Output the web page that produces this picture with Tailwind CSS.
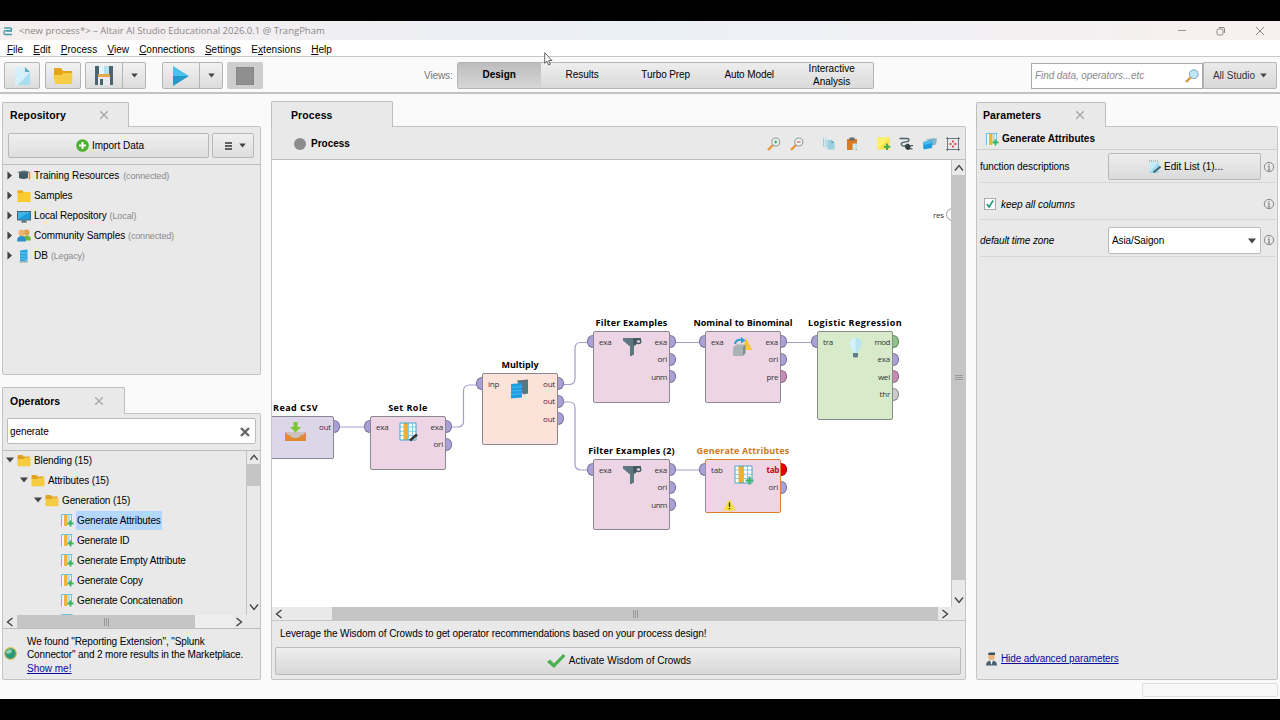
<!DOCTYPE html>
<html lang="en">
<head>
    <meta charset="UTF-8">
    <meta name="viewport" content="width=device-width, initial-scale=1.0">
    <title>Altair AI Studio</title>
    <script src="https://cdn.jsdelivr.net/npm/@tailwindcss/browser@4"></script>
</head>
<body class="bg-black w-[1280px] h-[720px] overflow-hidden py-[21px] text-black text-[10px] leading-[14px] font-['Liberation_Sans',Arial,sans-serif]">

    <!-- shared icons -->
    <svg class="hidden">
        <symbol id="folder" viewBox="0 0 14 13"><path d="M0.5 2q0-1 1-1h4l1 1.500h6v3h-12z" fill="#dfa21d"/><path d="M0.500 5h6l1-1.200h6v7.700q0 .8-1 .8h-11q-1 0-1-.8z" fill="#f5cb42"/></symbol>
        <symbol id="attr" viewBox="0 0 20 20"><path d="M1 1h17v17h-17z" fill="#fff"/><path d="M1 5h17M1 9.300h17M1 13.500h17M9.500 1v17M13.500 1v17" stroke="#7fcbe6" fill="none"/><rect x="4.500" y="1" width="4.500" height="17" fill="#f2ae2e"/><path d="M1 18v-17h17v17z" stroke="#3ea9cc" fill="none"/><path d="M15.500 11.500v8M11.500 15.500h8" stroke="#35b765" stroke-width="2.200"/></symbol>
        <symbol id="attr-small" viewBox="0 0 13 13"><path d="M.5.5h11v12h-11z" fill="#eef8fb"/><path d="M.5 12.500v-12h11M8 1v8M10.500 1v8" fill="none" stroke="#6dbfdb"/><rect x="3" y="1" width="3.500" height="11" fill="#efb53a"/><path d="M9.500 6.500v6M6.500 9.500h6" stroke="#35b765" stroke-width="2"/></symbol>
        <symbol id="funnel" viewBox="0 0 20 20"><path d="M1 1h18v2.500l-7 6v8l-4 2v-10l-7-6z" fill="#5d7680"/><path d="M11 1h8v2l-8 6z" fill="#455a64"/><ellipse cx="16.500" cy="4.500" rx="2.300" ry="2" fill="#eed8e8" stroke="#455a64" stroke-width="1.300"/></symbol>
        <symbol id="info" viewBox="0 0 12 12"><circle cx="6" cy="6" r="4.700" fill="none" stroke="#858585"/><path d="M6 5v4M4.800 9h2.400M4.900 5.200h1.200M6 2.800v1.200" stroke="#777" fill="none"/></symbol>
        <symbol id="close" viewBox="0 0 10 10"><path d="M1.200 1.200l7.600 7.600M8.800 1.200l-7.600 7.600" stroke="#ababab" stroke-width="1.500"/></symbol>
        <symbol id="down" viewBox="0 0 8 6"><path d="M0 .5h8l-4 5z" fill="#444"/></symbol>
        <symbol id="right" viewBox="0 0 6 10"><path d="M.5 0l5.500 5-5.500 5z" fill="#444"/></symbol>
        <symbol id="chevron" viewBox="0 0 10 10"><path d="M1 7.500l4-5 4 5" stroke="#444" stroke-width="1.400" fill="none"/></symbol>
        <symbol id="lens" viewBox="0 0 14 14"><path d="M1 13l5.500-5.500" stroke="#e8983a" stroke-width="2.400"/><circle cx="8.800" cy="5" r="4" fill="#eef3f2" stroke="#909b98" stroke-width="1.100"/></symbol>
    </svg>

    <div class="h-[678px] bg-[#fafafa] flex flex-col overflow-hidden">

        <!-- title bar -->
        <div class="h-[19px] shrink-0 flex items-center bg-linear-to-r from-[#f5eeee] via-[#ebf0f7] to-[#f8f0ee] pl-[3px] pr-[15px]">
            <svg class="w-[10px] h-[10px]" viewBox="0 0 10 10"><path d="M1 2h6q2 0 1.500 1.500t-2 1.200h-4q-1.500 0-1.500 2t1.500 1.800h6.500M3 5h6" stroke="#3f9bab" stroke-width="1.300" fill="none"/></svg>
            <span class="ml-[6px] text-[9.500px] tracking-[0.010px] text-[#8b8787] font-['Open_Sans',sans-serif]">&lt;new process*&gt; – Altair AI Studio Educational 2026.0.1 @ TrangPham</span>
            <div class="ml-auto flex items-center gap-[29px]">
                <svg class="w-[10px] h-[10px]" viewBox="0 0 10 10"><path d="M1 4.500h8" stroke="#999"/></svg>
                <svg class="w-[10px] h-[10px]" viewBox="0 0 10 10"><rect x="1" y="3" width="6" height="6" rx="1.500" fill="none" stroke="#888"/><path d="M3 1.500h4q1.500 0 1.500 1.500v4" fill="none" stroke="#888"/></svg>
                <svg class="w-[10px] h-[10px]" viewBox="0 0 10 10"><path d="M1 1l8 8M9 1l-8 8" stroke="#888"/></svg>
            </div>
        </div>

        <!-- menu -->
        <div class="h-[17px] shrink-0 flex items-center bg-white border-b border-[#c8c8c8] pl-[7px] pt-[3px] gap-[10.200px]">
            <span><u>F</u>ile</span>
            <span><u>E</u>dit</span>
            <span class="tracking-[0.050px]"><u>P</u>rocess</span>
            <span><u>V</u>iew</span>
            <span><u>C</u>onnections</span>
            <span><u>S</u>ettings</span>
            <span class="tracking-[0.080px]">E<u>x</u>tensions</span>
            <span><u>H</u>elp</span>
        </div>

        <!-- toolbar -->
        <div class="h-[37px] shrink-0 flex items-center border-b-2 border-[#c2c2c2] pl-1 pr-[3px] pt-[2px]">
            <button class="w-9 h-[27px] flex items-center justify-center border border-[#b5b5b5] rounded-[2px] bg-linear-to-b from-[#f2f2f2] to-[#dcdcdc]">
                <svg class="w-[17px] h-[20px]" viewBox="0 0 17 20"><path d="M1 1h10l5 5v13h-15z" fill="#d6f0fa"/><path d="M11 1v5h5z" fill="#62a9c2"/><path d="M16 6v13h-12z" fill="#a9def2"/></svg>
            </button>
            <button class="ml-[5px] w-9 h-[27px] flex items-center justify-center border border-[#b5b5b5] rounded-[2px] bg-linear-to-b from-[#f2f2f2] to-[#dcdcdc]">
                <svg class="w-5 h-[18px]" viewBox="0 0 20 18"><path d="M1 2q0-1 1-1h6l2 3h9v6h-18z" fill="#e6a417"/><path d="M.5 8h8l2-2h8q1 0 1 1l-.5 9q0 1-1 1h-15q-1 0-1-1z" fill="#f6cd46"/></svg>
            </button>
            <div class="ml-1 h-[27px] flex border border-[#b5b5b5] rounded-[2px] bg-linear-to-b from-[#f2f2f2] to-[#dcdcdc]">
                <button class="w-[37px] flex items-center justify-center border-r border-[#b5b5b5]">
                    <svg class="w-[18px] h-[19px]" viewBox="0 0 18 19"><path d="M0 0h18v19h-18z" fill="#4b6470"/><path d="M4 0h10v8h-10z" fill="#e4f4fa"/><path d="M9 0h5v8h-5z" fill="#b3e1f2"/><path d="M3 8h12v3h-12z" fill="#e3a64c"/><path d="M3 11h12v8h-12z" fill="#e8ecee"/><path d="M5 13h3v6h-3z" fill="#4b6470"/></svg>
                </button>
                <button class="w-[22px] flex items-center justify-center"><svg class="w-[7px] h-[5px]" viewBox="0 0 8 6"><use href="#down"/></svg></button>
            </div>
            <div class="ml-4 h-[27px] flex border border-[#b5b5b5] rounded-[2px] bg-linear-to-b from-[#f2f2f2] to-[#dcdcdc]">
                <button class="w-[37px] flex items-center justify-center border-r border-[#b5b5b5]">
                    <svg class="w-4 h-5" viewBox="0 0 16 20"><path d="M0 0l16 10h-16z" fill="#49c1ea"/><path d="M0 20l16-10h-16z" fill="#2699cb"/></svg>
                </button>
                <button class="w-[22px] flex items-center justify-center"><svg class="w-[7px] h-[5px]" viewBox="0 0 8 6"><use href="#down"/></svg></button>
            </div>
            <button class="ml-1 w-9 h-[27px] flex items-center justify-center rounded-[2px] bg-[#cdcdcd]"><span class="w-[18px] h-[18px] bg-[#8f8f8f] border border-[#868686]"></span></button>

            <span class="ml-[161px] text-[#777] tracking-[-0.100px]">Views:</span>
            <div class="ml-1 w-[417px] h-[27px] flex border border-[#b5b5b5] rounded-[2px] bg-linear-to-b from-[#eeeeee] to-[#dadada] text-center">
                <div class="w-[83px] pb-px flex items-center justify-center bg-linear-to-b from-[#bdbdbd] to-[#d6d6d6] font-bold">Design</div>
                <div class="w-[83px] pb-px flex items-center justify-center">Results</div>
                <div class="w-[84px] pb-px flex items-center justify-center tracking-[-0.100px]">Turbo Prep</div>
                <div class="w-[83px] pb-px flex items-center justify-center tracking-[-0.100px]">Auto Model</div>
                <div class="w-[82px] pb-[2px] flex items-center justify-center leading-[13px]">Interactive<br>Analysis</div>
            </div>

            <div class="ml-auto w-[172px] h-[26px] flex items-center justify-between bg-white border border-[#aaa] px-[3px]">
                <span class="italic text-[#8a8a8a] tracking-[-0.080px]">Find data, operators...etc</span>
                <svg class="w-[14px] h-[14px]" viewBox="0 0 14 14"><path d="M1 13l5-5" stroke="#d49a3a" stroke-width="2.400"/><circle cx="8.800" cy="5.200" r="4.400" fill="#bfe7f7" stroke="#7fa3b4"/></svg>
            </div>
            <button class="w-[74px] h-[27px] flex items-center justify-center gap-[5px] border border-[#b5b5b5] rounded-r-[2px] bg-linear-to-b from-[#eaeaea] to-[#d9d9d9] text-[#333]">All Studio <svg class="w-[7px] h-[5px]" viewBox="0 0 8 6"><use href="#down"/></svg></button>
        </div>

        <!-- panels -->
        <div class="h-[587px] shrink-0 flex pl-[2px] pt-[6px]">

            <!-- left column -->
            <div class="w-[259px] h-[580px] flex flex-col">
                <div class="relative z-10 w-[127px] h-[25px] mt-[2px] -mb-px shrink-0 flex items-center bg-[#e9e9e9] border border-b-0 border-[#bdbdbd] rounded-t-[2px] pl-[7px]">
                    <span class="w-[89px] font-bold text-[10.500px] tracking-[0.100px]">Repository</span>
                    <svg class="w-[10px] h-[10px]" viewBox="0 0 10 10"><use href="#close"/></svg>
                </div>
                <div class="h-[249px] shrink-0 bg-[#e9e9e9] border border-[#c4c4c4] rounded-[2px]">
                    <div class="h-[38px] flex items-start gap-[3px] pl-[5px] pt-[6px] border-b border-[#bdbdbd]">
                        <button class="w-[201px] h-[25px] flex items-center justify-center gap-[3px] border border-[#b8b8b8] rounded-[2px] bg-linear-to-b from-[#f0f0f0] to-[#dedede]">
                            <svg class="ml-[3px] w-[13px] h-[13px]" viewBox="0 0 13 13"><circle cx="6.500" cy="6.500" r="6.300" fill="#4caf2f"/><path d="M6.500 3v7M3 6.500h7" stroke="#fff" stroke-width="2"/></svg>
                            Import Data
                        </button>
                        <button class="w-[42px] h-[25px] flex items-center justify-center gap-[7px] pl-1 border border-[#b8b8b8] rounded-[2px] bg-linear-to-b from-[#f0f0f0] to-[#dedede]">
                            <svg class="w-[7px] h-[8px]" viewBox="0 0 7 8"><path d="M0 1h7M0 4h7M0 7h7" stroke="#333" stroke-width="1.300"/></svg>
                            <svg class="w-[7px] h-[5px]" viewBox="0 0 8 6"><use href="#down"/></svg>
                        </button>
                    </div>
                    <div class="pl-[4px] pt-px">
                        <div class="h-5 flex items-center">
                            <svg class="mb-px w-[5px] h-[9px]" viewBox="0 0 6 10"><use href="#right"/></svg>
                            <svg class="mb-px ml-[5px] w-[14px] h-[13px]" viewBox="0 0 14 13"><path d="M0 3l7-1.500 6.500 1.500-6.500 2.500z" fill="#5b7480"/><path d="M2 3.500h9v5.500q-4.500 2-9 0z" fill="#435b66"/><path d="M12.500 3.500v7" stroke="#e08e34" stroke-width="1.400"/></svg>
                            <span class="ml-[3px] tracking-[-0.060px]">Training Resources</span><span class="ml-1 text-[9px] text-[#8a8a8a] tracking-[-0.150px]">(connected)</span>
                        </div>
                        <div class="h-5 flex items-center">
                            <svg class="mb-px w-[5px] h-[9px]" viewBox="0 0 6 10"><use href="#right"/></svg>
                            <svg class="ml-[5px] w-[14px] h-[12px]" viewBox="0 0 14 12"><path d="M.5.500h5l1 1.500h7v10h-13z" fill="#f9cb2e"/><path d="M.5.500h5l1 1.500-1 1h-5z" fill="#e7a91e"/></svg>
                            <span class="ml-[3px] tracking-[-0.050px]">Samples</span>
                        </div>
                        <div class="h-5 flex items-center">
                            <svg class="mb-px w-[5px] h-[9px]" viewBox="0 0 6 10"><use href="#right"/></svg>
                            <svg class="ml-[5px] w-[14px] h-[13px]" viewBox="0 0 14 13"><path d="M0 1h14v9.500h-14z" fill="#4a6572"/><path d="M1 2h12v7.500h-12z" fill="#1b9ddb"/><path d="M1 2h12l-12 7z" fill="#3db4ea"/><path d="M5 10.500h4v1h1v1h-6v-1h1z" fill="#4a6572"/></svg>
                            <span class="ml-[3px] tracking-[-0.120px]">Local Repository</span><span class="ml-[3px] text-[9px] text-[#8a8a8a] tracking-[-0.100px]">(Local)</span>
                        </div>
                        <div class="h-5 flex items-center">
                            <svg class="mb-px w-[5px] h-[9px]" viewBox="0 0 6 10"><use href="#right"/></svg>
                            <svg class="mb-px ml-[5px] w-[14px] h-[13px]" viewBox="0 0 14 13"><circle cx="9.500" cy="3.500" r="3" fill="#e0a34d"/><path d="M6 11.500q0-5 4-5t4 5z" fill="#6fb540"/><circle cx="4.700" cy="4" r="3.200" fill="#eeb271"/><path d="M0 12.500q0-5.500 4.500-5.500t4.500 5.500z" fill="#2c8fc8"/></svg>
                            <span class="ml-[3px] tracking-[-0.070px]">Community Samples</span><span class="ml-[3px] text-[9px] text-[#8a8a8a] tracking-[-0.150px]">(connected)</span>
                        </div>
                        <div class="h-5 flex items-center">
                            <svg class="mb-px w-[5px] h-[9px]" viewBox="0 0 6 10"><use href="#right"/></svg>
                            <svg class="ml-[5px] w-[14px] h-[14px]" viewBox="0 0 14 14"><path d="M3 1.500l7.500-1v11l-7.500 1z" fill="#25a5dd"/><path d="M3 4h8M3 7h8M3 10h8" stroke="#8ed5f2" stroke-width=".7"/><path d="M2.500 12.500l8-.5v1.500h-8z" fill="#8aa"/></svg>
                            <span class="ml-[3px]">DB</span><span class="ml-[3px] text-[9px] text-[#8a8a8a] tracking-[-0.150px]">(Legacy)</span>
                        </div>
                    </div>
                </div>

                <div class="relative z-10 w-[123px] h-[27px] mt-[12px] -mb-px shrink-0 flex items-center bg-[#e9e9e9] border border-b-0 border-[#bdbdbd] rounded-t-[2px] pl-[7px]">
                    <span class="w-[84px] font-bold text-[10.500px]">Operators</span>
                    <svg class="w-[10px] h-[10px]" viewBox="0 0 10 10"><use href="#close"/></svg>
                </div>
                <div class="h-[267px] shrink-0 bg-[#e9e9e9] border border-[#c4c4c4] rounded-[2px] flex flex-col">
                    <div class="h-[37px] shrink-0 pl-1 pt-[4px] border-b border-[#bdbdbd]">
                        <div class="w-[249px] h-[26px] flex items-center justify-between pl-[2px] pr-[5px] pt-px bg-white border border-[#bbb] rounded-[2px]">
                            <span class="tracking-[-0.100px]">generate</span>
                            <svg class="w-[10px] h-[10px]" viewBox="0 0 10 10"><path d="M1 1l8 8M9 1l-8 8" stroke="#666" stroke-width="2.400"/></svg>
                        </div>
                    </div>
                    <div class="h-[164px] shrink-0 flex">
                        <div class="w-[244px] overflow-hidden border-r border-[#c4c4c4]">
                            <div class="h-5 flex items-center pl-[3px]"><svg class="mb-[2px] w-[8px] h-[6px]" viewBox="0 0 8 6"><use href="#down"/></svg><svg class="mb-px ml-[3px] w-[14px] h-[13px]" viewBox="0 0 14 13"><use href="#folder"/></svg><span class="ml-[3px] tracking-[-0.120px]">Blending (15)</span></div>
                            <div class="h-5 flex items-center pl-[17px]"><svg class="mb-[2px] w-[8px] h-[6px]" viewBox="0 0 8 6"><use href="#down"/></svg><svg class="mb-px ml-[3px] w-[14px] h-[13px]" viewBox="0 0 14 13"><use href="#folder"/></svg><span class="ml-[3px] tracking-[-0.120px]">Attributes (15)</span></div>
                            <div class="h-5 flex items-center pl-[31px]"><svg class="mb-[2px] w-[8px] h-[6px]" viewBox="0 0 8 6"><use href="#down"/></svg><svg class="mb-px ml-[3px] w-[14px] h-[13px]" viewBox="0 0 14 13"><use href="#folder"/></svg><span class="ml-[3px] tracking-[-0.120px]">Generation (15)</span></div>
                            <div class="h-5 flex items-center pl-[58px]"><svg class="mb-px w-[13px] h-[13px]" viewBox="0 0 13 13"><use href="#attr-small"/></svg><span class="ml-[2px] mb-px pl-px pr-[1px] h-[19px] leading-[19px] bg-[#b3d7ff] tracking-[-0.130px]">Generate Attributes</span></div>
                            <div class="h-5 flex items-center pl-[58px]"><svg class="mb-px w-[13px] h-[13px]" viewBox="0 0 13 13"><use href="#attr-small"/></svg><span class="ml-[3px] tracking-[-0.200px]">Generate ID</span></div>
                            <div class="h-5 flex items-center pl-[58px]"><svg class="mb-px w-[13px] h-[13px]" viewBox="0 0 13 13"><use href="#attr-small"/></svg><span class="ml-[3px] tracking-[-0.150px]">Generate Empty Attribute</span></div>
                            <div class="h-5 flex items-center pl-[58px]"><svg class="mb-px w-[13px] h-[13px]" viewBox="0 0 13 13"><use href="#attr-small"/></svg><span class="ml-[3px] tracking-[-0.150px]">Generate Copy</span></div>
                            <div class="h-5 flex items-center pl-[58px]"><svg class="mb-px w-[13px] h-[13px]" viewBox="0 0 13 13"><use href="#attr-small"/></svg><span class="ml-[3px] tracking-[-0.150px]">Generate Concatenation</span></div>
                            <div class="h-5 flex items-center pl-[58px]"><svg class="mb-px w-[13px] h-[13px]" viewBox="0 0 13 13"><use href="#attr-small"/></svg></div>
                        </div>
                        <div class="flex-1 flex flex-col items-center pt-[2px]">
                            <svg class="w-[10px] h-[9px] shrink-0" viewBox="0 0 10 10"><use href="#chevron"/></svg>
                            <div class="mt-[2px] w-full h-[22px] bg-[#c5c5c5]"></div>
                            <svg class="mt-auto mb-[3px] w-[10px] h-[10px] rotate-180" viewBox="0 0 10 10"><use href="#chevron"/></svg>
                        </div>
                    </div>
                    <div class="h-[14px] shrink-0 flex items-center border-b border-[#bbb]">
                        <svg class="ml-[2px] w-[10px] h-[10px] -rotate-90" viewBox="0 0 10 10"><use href="#chevron"/></svg>
                        <div class="ml-[2px] w-[178px] h-[13px] flex items-center justify-center gap-px bg-[#c5c5c5]"><span class="w-px h-2 bg-[#999]"></span><span class="w-px h-2 bg-[#999]"></span><span class="w-px h-2 bg-[#999]"></span></div>
                        <div class="w-[39px] h-[13px] bg-[#eeeeee]"></div>
                        <svg class="w-[10px] h-[10px] rotate-90" viewBox="0 0 10 10"><use href="#chevron"/></svg>
                    </div>
                    <div class="flex-1 flex items-center pt-[2px]">
                        <svg class="ml-[1px] mb-[4px] w-[13px] h-[13px]" viewBox="0 0 12 12"><circle cx="6" cy="6" r="5.400" fill="#2c9a77" stroke="#d8c05a"/><path d="M3 3q3-2 4 0t-2 3-3-1z" fill="#8fd3b8"/></svg>
                        <div class="ml-[10px] leading-[13.300px] whitespace-nowrap"><span class="tracking-[-0.120px]">We found "Reporting Extension", "Splunk</span><br><span class="tracking-[-0.130px]">Connector" and 2 more results in the Marketplace.</span><br><a class="underline text-[#0a0a9c]">Show me!</a></div>
                    </div>
                </div>
            </div>

            <!-- process panel -->
            <div class="ml-[10px] w-[695px] h-[580px] flex flex-col">
                <div class="relative z-10 w-[122px] h-[26px] mt-px -mb-px shrink-0 flex items-center bg-[#e9e9e9] border border-b-0 border-[#bdbdbd] rounded-t-[2px] pl-[19px] font-bold text-[10.500px] tracking-[0.100px]">Process</div>
                <div class="h-[554px] shrink-0 bg-[#e9e9e9] border border-[#c4c4c4] rounded-[2px] flex flex-col">
                    <div class="h-[33px] shrink-0 flex items-center border-b border-[#bdbdbd] pl-[22px] pr-[5px] pt-[2px]">
                        <span class="mb-px w-[12px] h-[12px] rounded-full bg-[#8c8c8c]"></span>
                        <span class="ml-[5px] font-bold">Process</span>
                        <div class="ml-auto mb-px flex items-center">
                            <svg class="w-[14px] h-[14px]" viewBox="0 0 14 14"><use href="#lens"/><path d="M8.800 3.200v3.600M7 5h3.600" stroke="#3ba35e"/></svg>
                            <svg class="ml-[9px] w-[14px] h-[14px]" viewBox="0 0 14 14"><use href="#lens"/><path d="M7 5h3.600" stroke="#c44"/></svg>
                            <svg class="ml-[19px] w-[12px] h-[13px]" viewBox="0 0 12 13"><path d="M.5.500h4l2 2v8h-6z" fill="#d5e8ee"/><path d="M.5 1v9M3 3v7" stroke="#a5cbd8"/><path d="M4.500 3h4l3 3v6.500h-7z" fill="#9ccfdf"/><path d="M8.500 3v3h3z" fill="#6aa2b5"/></svg>
                            <svg class="ml-[11px] w-[13px] h-[14px]" viewBox="0 0 13 14"><path d="M1 2h10v11h-10z" fill="#db7b1d"/><path d="M3.500.5h5v3h-5z" fill="#5b6f78"/><path d="M6.500 6.500h5.500v4l-3 3h-2.500z" fill="#c6e8f4"/></svg>
                            <svg class="ml-[18px] w-[14px] h-[14px]" viewBox="0 0 14 14"><path d="M.5.500h12v12h-12z" fill="#f7e54a"/><path d="M.5.500h12l-12 12z" fill="#fff06a"/><path d="M10 6.500v6.500M6.800 9.800h6.500" stroke="#38b05a" stroke-width="2"/></svg>
                            <svg class="ml-[8px] w-[14px] h-[14px]" viewBox="0 0 14 14"><path d="M.5 1.500h7.500q2 0 2 1.500t-2 1.700l-4 .6q-2.500 1-1.500 2.500t3 1.200h2" stroke="#4c616b" stroke-width="1.300" fill="none"/><path d="M6.500 7.500l3-1 2 2.500-.5 3.500-3 .5-2-2.500z" fill="#333f45"/><path d="M11 9l3-.5M10.500 11.500l3 .5" stroke="#333"/></svg>
                            <svg class="ml-[9px] w-[15px] h-[13px]" viewBox="0 0 15 13"><path d="M4 2.500l8-1.500 3 .5-1 6-3 1z" fill="#8fb6c5"/><path d="M1 5l10-2-1 8-8.500 1.500z" fill="#1c9cdb"/><path d="M1 5l10-2-.4 3-9.300 2z" fill="#50bbea"/></svg>
                            <svg class="ml-[9px] w-[14px] h-[14px]" viewBox="0 0 14 14"><path d="M1.500 0v14M12.500 0v14M0 1.500h14M0 12.500h14" stroke="#66777f"/><path d="M7 3.500v2M7 8.500v2M3.500 7h2M8.500 7h2" stroke="#d65050" stroke-width="1.900"/></svg>
                        </div>
                    </div>
                    <div class="h-[447px] shrink-0 flex">

                        <!-- process canvas -->
                        <div class="relative w-[680px] overflow-hidden bg-white border-r border-[#c4c4c4] font-['Open_Sans',sans-serif] text-[8px] text-[#333] leading-[12px] tracking-[-0.200px]">
                            <svg class="absolute inset-0 w-[680px] h-[447px]" viewBox="272 160 680 447"><path d="M340 427h26M452 427h5.500q6 0 6-6v-30q0-6 6-6h7M564 384.500h5q6 0 6-6v-30q0-6 6-6h7M564 402h5q6 0 6 6v56q0 6 6 6h7M675 342.500h25M787 342.500h25M675 470h25" fill="none" stroke="#a79ccc" stroke-width="1.200"/></svg>

                            <div class="absolute left-[-15px] top-[256px] w-[77px] h-[43px] flex justify-between pt-[1px] bg-[#dcd6e9] border border-[#8b8791] rounded-[2px]">
                                <div class="absolute -top-[15px] left-1/2 -translate-x-1/2 whitespace-nowrap text-[9px] font-bold text-black tracking-[0.450px]">Read CSV</div>
                                <svg class="absolute left-[27px] top-[5px] w-[21px] h-[20px]" viewBox="0 0 21 20"><path d="M0 10h21v9h-21z" fill="#e08a34"/><path d="M0 10h21l-3 3h-2q-1 3-5.500 3t-5.500-3h-2z" fill="#c9c2c0"/><path d="M8.500 0h4v5h3.500l-5.500 5.500-5.500-5.500h3.500z" fill="#7dc832"/></svg>
                                <div></div>
                                <div class="-mr-[7px]">
                                    <div class="h-[17.500px] flex items-center justify-end gap-[3px]">out<span class="w-[6px] h-[13px] rounded-r-full bg-[#aa9fd6] border border-l-0 border-[#7b7599]"></span></div>
                                </div>
                            </div>

                            <div class="absolute left-[98px] top-[256px] w-[76px] h-[54px] flex justify-between pt-[1px] bg-[#edd5e6] border border-[#8b8791] rounded-[2px]">
                                <div class="absolute -top-[15px] left-1/2 -translate-x-1/2 whitespace-nowrap text-[9px] font-bold text-black tracking-[0.450px]">Set Role</div>
                                <svg class="absolute left-[28px] top-[5px] w-[20px] h-[20px]" viewBox="0 0 20 20"><path d="M1 1h16v17h-16z" fill="#fff"/><path d="M1 5h16M1 9.300h16M1 13.500h16M9.500 1v17M13.500 1v17" stroke="#7fcbe6" fill="none"/><rect x="4.500" y="1" width="4.500" height="17" fill="#f2ae2e"/><path d="M1 18v-17h16v17z" stroke="#3ea9cc" fill="none"/><path d="M11 18.500l7-6" stroke="#333" stroke-width="2.600"/></svg>
                                <div class="-ml-[7px]">
                                    <div class="h-[17.500px] flex items-center gap-[6px]"><span class="w-[6px] h-[13px] rounded-l-full bg-[#aa9fd6] border border-r-0 border-[#7b7599]"></span>exa</div>
                                </div>
                                <div class="-mr-[7px]">
                                    <div class="h-[17.500px] flex items-center justify-end gap-[3px]">exa<span class="w-[6px] h-[13px] rounded-r-full bg-[#aa9fd6] border border-l-0 border-[#7b7599]"></span></div>
                                    <div class="h-[17.500px] flex items-center justify-end gap-[3px]">ori<span class="w-[6px] h-[13px] rounded-r-full bg-[#aa9fd6] border border-l-0 border-[#7b7599]"></span></div>
                                </div>
                            </div>

                            <div class="absolute left-[210px] top-[213px] w-[76px] h-[72px] flex justify-between pt-[1px] bg-[#fbe3d9] border border-[#8b8791] rounded-[2px]">
                                <div class="absolute -top-[15px] left-1/2 -translate-x-1/2 whitespace-nowrap text-[9px] font-bold text-black tracking-[-0.050px]">Multiply</div>
                                <svg class="absolute left-[27px] top-[5px] w-[19px] h-[20px]" viewBox="0 0 19 20"><path d="M7 1.500l11-1v14l-5 1z" fill="#5b7480"/><path d="M1 5l11-1v14.500l-11 1z" fill="#1c9fe0"/><path d="M1 8.500l11-.8M1 12l11-.6M1 15.500l11-.8" stroke="#58bff0" stroke-width=".7"/></svg>
                                <div class="-ml-[7px]">
                                    <div class="h-[17.500px] flex items-center gap-[6px]"><span class="w-[6px] h-[13px] rounded-l-full bg-[#aa9fd6] border border-r-0 border-[#7b7599]"></span>inp</div>
                                </div>
                                <div class="-mr-[7px]">
                                    <div class="h-[17.500px] flex items-center justify-end gap-[3px]">out<span class="w-[6px] h-[13px] rounded-r-full bg-[#aa9fd6] border border-l-0 border-[#7b7599]"></span></div>
                                    <div class="h-[17.500px] flex items-center justify-end gap-[3px]">out<span class="w-[6px] h-[13px] rounded-r-full bg-[#aa9fd6] border border-l-0 border-[#7b7599]"></span></div>
                                    <div class="h-[17.500px] flex items-center justify-end gap-[3px]">out<span class="w-[6px] h-[13px] rounded-r-full bg-[#aa9fd6] border border-l-0 border-[#7b7599]"></span></div>
                                </div>
                            </div>

                            <div class="absolute left-[321px] top-[171px] w-[77px] h-[72px] flex justify-between pt-[1px] bg-[#edd5e6] border border-[#8b8791] rounded-[2px]">
                                <div class="absolute -top-[15px] left-1/2 -translate-x-1/2 whitespace-nowrap text-[9px] font-bold text-black tracking-[0.200px]">Filter Examples</div>
                                <svg class="absolute left-[28px] top-[5px] w-[20px] h-[20px]" viewBox="0 0 20 20"><use href="#funnel"/></svg>
                                <div class="-ml-[7px]">
                                    <div class="h-[17.500px] flex items-center gap-[6px]"><span class="w-[6px] h-[13px] rounded-l-full bg-[#aa9fd6] border border-r-0 border-[#7b7599]"></span>exa</div>
                                </div>
                                <div class="-mr-[7px]">
                                    <div class="h-[17.500px] flex items-center justify-end gap-[3px]">exa<span class="w-[6px] h-[13px] rounded-r-full bg-[#aa9fd6] border border-l-0 border-[#7b7599]"></span></div>
                                    <div class="h-[17.500px] flex items-center justify-end gap-[3px]">ori<span class="w-[6px] h-[13px] rounded-r-full bg-[#aa9fd6] border border-l-0 border-[#7b7599]"></span></div>
                                    <div class="h-[17.500px] flex items-center justify-end gap-[3px] tracking-[-0.500px]">unm<span class="w-[6px] h-[13px] rounded-r-full bg-[#aa9fd6] border border-l-0 border-[#7b7599]"></span></div>
                                </div>
                            </div>

                            <div class="absolute left-[433px] top-[171px] w-[76px] h-[72px] flex justify-between pt-[1px] bg-[#edd5e6] border border-[#8b8791] rounded-[2px]">
                                <div class="absolute -top-[15px] left-1/2 -translate-x-1/2 whitespace-nowrap text-[9px] font-bold text-black tracking-[-0.040px] [word-spacing:0.500px]">Nominal to Binominal</div>
                                <svg class="absolute left-[26px] top-[5px] w-[21px] h-[20px]" viewBox="0 0 21 20"><path d="M14 1l6.500 12h-10z" fill="#f9c53b"/><path d="M1 10l4-2.500h8l-2 2.500v9h-10z" fill="#a9b4b9"/><path d="M11 10l2.500-2.500v8.500l-2.500 3z" fill="#7f8c91"/><path d="M3 7q1-5 7-4" fill="none" stroke="#2b9fd0" stroke-width="2"/><path d="M9 0l4.500 3.500-4.500 3z" fill="#2b9fd0"/></svg>
                                <div class="-ml-[7px]">
                                    <div class="h-[17.500px] flex items-center gap-[6px]"><span class="w-[6px] h-[13px] rounded-l-full bg-[#aa9fd6] border border-r-0 border-[#7b7599]"></span>exa</div>
                                </div>
                                <div class="-mr-[7px]">
                                    <div class="h-[17.500px] flex items-center justify-end gap-[3px]">exa<span class="w-[6px] h-[13px] rounded-r-full bg-[#aa9fd6] border border-l-0 border-[#7b7599]"></span></div>
                                    <div class="h-[17.500px] flex items-center justify-end gap-[3px]">ori<span class="w-[6px] h-[13px] rounded-r-full bg-[#aa9fd6] border border-l-0 border-[#7b7599]"></span></div>
                                    <div class="h-[17.500px] flex items-center justify-end gap-[3px] tracking-[-0.400px]">pre<span class="w-[6px] h-[13px] rounded-r-full bg-[#c98bb8] border border-l-0 border-[#8b6a83]"></span></div>
                                </div>
                            </div>

                            <div class="absolute left-[545px] top-[171px] w-[76px] h-[89px] flex justify-between pt-[1px] bg-[#d7ebcb] border border-[#878f84] rounded-[2px]">
                                <div class="absolute -top-[15px] left-1/2 -translate-x-1/2 whitespace-nowrap text-[9px] font-bold text-black tracking-[0.450px]">Logistic Regression</div>
                                <svg class="absolute left-[31px] top-[5px] w-[13px] h-[21px]" viewBox="0 0 13 21"><path d="M6.500.5a6 6 0 0 1 6 6q0 2.500-2 5-1 1.500-1.200 4h-5.600q-.2-2.500-1.200-4-2-2.500-2-5a6 6 0 0 1 6-6z" fill="#b8e4f2"/><path d="M6.500.5a6 6 0 0 0-6 6q0 2.500 2 5 1 1.500 1.200 4h2.800z" fill="#d6f1f8"/><path d="M4 16h5v3.500l-1 1h-3l-1-1z" fill="#607d8b"/></svg>
                                <div class="-ml-[7px]">
                                    <div class="h-[17.500px] flex items-center gap-[6px]"><span class="w-[6px] h-[13px] rounded-l-full bg-[#aa9fd6] border border-r-0 border-[#7b7599]"></span>tra</div>
                                </div>
                                <div class="-mr-[7px]">
                                    <div class="h-[17.500px] flex items-center justify-end gap-[3px] tracking-[-0.500px]">mod<span class="w-[6px] h-[13px] rounded-r-full bg-[#8fc48a] border border-l-0 border-[#66865f]"></span></div>
                                    <div class="h-[17.500px] flex items-center justify-end gap-[3px]">exa<span class="w-[6px] h-[13px] rounded-r-full bg-[#aa9fd6] border border-l-0 border-[#7b7599]"></span></div>
                                    <div class="h-[17.500px] flex items-center justify-end gap-[3px]">wei<span class="w-[6px] h-[13px] rounded-r-full bg-[#c98bb8] border border-l-0 border-[#8b6a83]"></span></div>
                                    <div class="h-[17.500px] flex items-center justify-end gap-[3px]">thr<span class="w-[6px] h-[13px] rounded-r-full bg-[#cfcacf] border border-l-0 border-[#888]"></span></div>
                                </div>
                            </div>

                            <div class="absolute left-[321px] top-[299px] w-[77px] h-[71px] flex justify-between pt-px bg-[#edd5e6] border border-[#8b8791] rounded-[2px]">
                                <div class="absolute -top-[15px] left-1/2 -translate-x-1/2 whitespace-nowrap text-[9px] font-bold text-black tracking-[0.220px]">Filter Examples (2)</div>
                                <svg class="absolute left-[28px] top-[5px] w-[20px] h-[20px]" viewBox="0 0 20 20"><use href="#funnel"/></svg>
                                <div class="-ml-[7px]">
                                    <div class="h-[17.500px] flex items-center gap-[6px]"><span class="w-[6px] h-[13px] rounded-l-full bg-[#aa9fd6] border border-r-0 border-[#7b7599]"></span>exa</div>
                                </div>
                                <div class="-mr-[7px]">
                                    <div class="h-[17.500px] flex items-center justify-end gap-[3px]">exa<span class="w-[6px] h-[13px] rounded-r-full bg-[#aa9fd6] border border-l-0 border-[#7b7599]"></span></div>
                                    <div class="h-[17.500px] flex items-center justify-end gap-[3px]">ori<span class="w-[6px] h-[13px] rounded-r-full bg-[#aa9fd6] border border-l-0 border-[#7b7599]"></span></div>
                                    <div class="h-[17.500px] flex items-center justify-end gap-[3px] tracking-[-0.500px]">unm<span class="w-[6px] h-[13px] rounded-r-full bg-[#aa9fd6] border border-l-0 border-[#7b7599]"></span></div>
                                </div>
                            </div>

                            <div class="absolute left-[433px] top-[299px] w-[76px] h-[54px] flex justify-between pt-px bg-[#edd5e6] border border-[#d9822b] rounded-[2px]">
                                <div class="absolute -top-[15px] left-1/2 -translate-x-1/2 whitespace-nowrap text-[9px] font-bold text-[#cc7a1e] tracking-[0.130px]">Generate Attributes</div>
                                <svg class="absolute left-[28px] top-[5px] w-[20px] h-[20px]" viewBox="0 0 20 20"><use href="#attr"/></svg>
                                <svg class="absolute left-[17px] top-[39px] w-[13px] h-[12px]" viewBox="0 0 13 12"><path d="M6.500 0l6.500 11.500h-13z" fill="#f6dc3e"/><path d="M6.500 3.500v4.500M6.500 9v1.300" stroke="#333" stroke-width="1.300"/></svg>
                                <div class="-ml-[7px]">
                                    <div class="h-[17.500px] flex items-center gap-[6px]"><span class="w-[6px] h-[13px] rounded-l-full bg-[#aa9fd6] border border-r-0 border-[#7b7599]"></span>tab</div>
                                </div>
                                <div class="-mr-[7px]">
                                    <div class="h-[17.500px] flex items-center justify-end gap-[2px] font-bold text-[#c4001a] tracking-[-0.300px]">tab<span class="w-[6px] h-[13px] rounded-r-full bg-[#e0000f] border border-l-0 border-[#a8000c]"></span></div>
                                    <div class="h-[17.500px] flex items-center justify-end gap-[3px]">ori<span class="w-[6px] h-[13px] rounded-r-full bg-[#aa9fd6] border border-l-0 border-[#7b7599]"></span></div>
                                </div>
                            </div>

                            <div class="absolute left-[661px] top-[48px] flex items-center gap-[2px]">res<span class="w-[13px] h-[13px] rounded-full border border-[#999]"></span></div>

                        </div>
                        <div class="flex-1 flex flex-col items-center pt-[3px]">
                            <svg class="w-[10px] h-[10px] shrink-0" viewBox="0 0 10 10"><use href="#chevron"/></svg>
                            <div class="mt-[2px] w-full h-[405px] flex flex-col items-center justify-center gap-px bg-[#c5c5c5]"><span class="w-2 h-px bg-[#999]"></span><span class="w-2 h-px bg-[#999]"></span><span class="w-2 h-px bg-[#999]"></span></div>
                            <svg class="mt-auto mb-[2px] w-[10px] h-[10px] rotate-180" viewBox="0 0 10 10"><use href="#chevron"/></svg>
                        </div>
                    </div>
                    <div class="h-[14px] shrink-0 flex items-center border-b border-[#c4c4c4]">
                        <svg class="ml-[2px] w-[10px] h-[10px] -rotate-90" viewBox="0 0 10 10"><use href="#chevron"/></svg>
                        <div class="w-[48px]"></div>
                        <div class="w-[606px] h-[13px] flex items-center justify-center gap-px bg-[#c5c5c5]"><span class="w-px h-2 bg-[#999]"></span><span class="w-px h-2 bg-[#999]"></span><span class="w-px h-2 bg-[#999]"></span></div>
                        <svg class="ml-[2px] w-[10px] h-[10px] rotate-90" viewBox="0 0 10 10"><use href="#chevron"/></svg>
                    </div>
                    <div class="h-[26px] shrink-0 flex items-center pl-[8px] tracking-[-0.085px]">Leverage the Wisdom of Crowds to get operator recommendations based on your process design!</div>
                    <button class="ml-[3px] w-[686px] h-[28px] flex items-center justify-center gap-[3px] border border-[#bbb] rounded-[2px] bg-linear-to-b from-[#eeeeee] to-[#d8d8d8]">
                        <svg class="ml-px w-5 h-[16px]" viewBox="0 0 20 16"><path d="M1 9l3-2.500 4 4 9-9.500 2.500 2-11.500 12z" fill="#4caf50"/></svg>
                        <span>Activate Wisdom of Crowds</span>
                    </button>
                </div>
            </div>

            <!-- parameters panel -->
            <div class="ml-[10px] w-[302px] h-[580px] flex flex-col">
                <div class="relative z-10 w-[130px] h-[25px] mt-[2px] -mb-px shrink-0 flex items-center bg-[#e9e9e9] border border-b-0 border-[#bdbdbd] rounded-t-[2px] pl-[6px]">
                    <span class="w-[92px] font-bold text-[10.500px] tracking-[0.100px]">Parameters</span>
                    <svg class="w-[10px] h-[10px]" viewBox="0 0 10 10"><use href="#close"/></svg>
                </div>
                <div class="h-[554px] shrink-0 bg-[#e9e9e9] border border-[#c4c4c4] rounded-[2px] flex flex-col">
                    <div class="h-[23px] shrink-0 flex items-center border-b border-[#cfcfcf] pl-[9px] pt-[2px]"><svg class="w-[13px] h-[13px]" viewBox="0 0 13 13"><use href="#attr-small"/></svg><span class="ml-[3px] font-bold">Generate Attributes</span></div>
                    <div class="ml-[3px] mr-px h-[33px] shrink-0 flex items-center border-b border-[#d6d6d6] pt-px">
                        <span class="w-[128px] pt-px tracking-[-0.080px]">function descriptions</span>
                        <button class="w-[153px] h-[27px] flex items-center justify-center gap-[3px] border border-[#b8b8b8] rounded-[2px] bg-linear-to-b from-[#eeeeee] to-[#dadada]">
                            <svg class="ml-[2px] w-[13px] h-[14px]" viewBox="0 0 13 14"><path d="M1 2h10v11h-10z" fill="#9fd8ee"/><path d="M1 2h10l-10 11z" fill="#c6eaf7"/><path d="M1 1h10" stroke="#788" stroke-dasharray="1 1"/><path d="M5.500 12.500l7-6" stroke="#4f646e" stroke-width="2"/></svg>
                            Edit List (1)...
                        </button>
                        <svg class="ml-[2px] w-3 h-3" viewBox="0 0 12 12"><use href="#info"/></svg>
                    </div>
                    <div class="ml-[3px] mr-px h-[37px] shrink-0 flex items-center border-b border-[#d6d6d6] pl-[4px] pt-[6px]">
                        <span class="w-[12px] h-[12px] flex items-center justify-center bg-white border border-[#aaa]"><svg class="w-[8px] h-[8px]" viewBox="0 0 8 8"><path d="M.8 4l2.200 3 4.200-6.500" fill="none" stroke="#249a73" stroke-width="1.600"/></svg></span>
                        <span class="ml-[5px] w-[262px] pt-px italic tracking-[-0.030px]">keep all columns</span>
                        <svg class="w-3 h-3 shrink-0" viewBox="0 0 12 12"><use href="#info"/></svg>
                    </div>
                    <div class="ml-[3px] mr-px h-[37px] shrink-0 flex items-center border-b border-[#d6d6d6] pt-[4px]">
                        <span class="w-[128px] pt-px italic tracking-[-0.120px]">default time zone</span>
                        <div class="w-[153px] h-[27px] flex items-center justify-between bg-white border border-[#bbb] rounded-[2px] pl-[3px] pr-[4px] pt-px tracking-[-0.100px]">Asia/Saigon <svg class="w-[8px] h-[6px]" viewBox="0 0 8 6"><use href="#down"/></svg></div>
                        <svg class="ml-[2px] w-3 h-3" viewBox="0 0 12 12"><use href="#info"/></svg>
                    </div>
                    <div class="mt-auto mb-[12px] h-[16px] flex items-center pl-[8px]">
                        <svg class="w-[13px] h-[14px]" viewBox="0 0 13 14"><path d="M1 13.500q0-5 5.500-5t5.500 5z" fill="#4a6070"/><path d="M5 8l1.500 5 1.500-5z" fill="#fff"/><circle cx="6.500" cy="5" r="3.200" fill="#e8b27a"/><path d="M3 2.500l1-2h6v2.500h-7z" fill="#3f545e"/></svg>
                        <a class="ml-[3px] underline text-[#0a0a9c] tracking-[-0.100px]">Hide advanced parameters</a>
                    </div>
                </div>
            </div>
        </div>

        <!-- status bar -->
        <div class="flex-1 flex pt-[2px] pr-[2px]"><div class="ml-auto w-[136px] h-[14px] bg-[#f8f8f8] border border-[#dedede] rounded-[2px]"></div></div>
    </div>

    <!-- mouse pointer -->
    <svg class="absolute left-[544px] top-[52px] w-[9px] h-[14px]" viewBox="0 0 9 14"><path d="M.7.700v10.600l2.300-2.200 1.600 3.900 1.700-.7-1.600-3.800h3.300z" fill="#fff" stroke="#555" stroke-width=".9"/></svg>
</body>
</html>
